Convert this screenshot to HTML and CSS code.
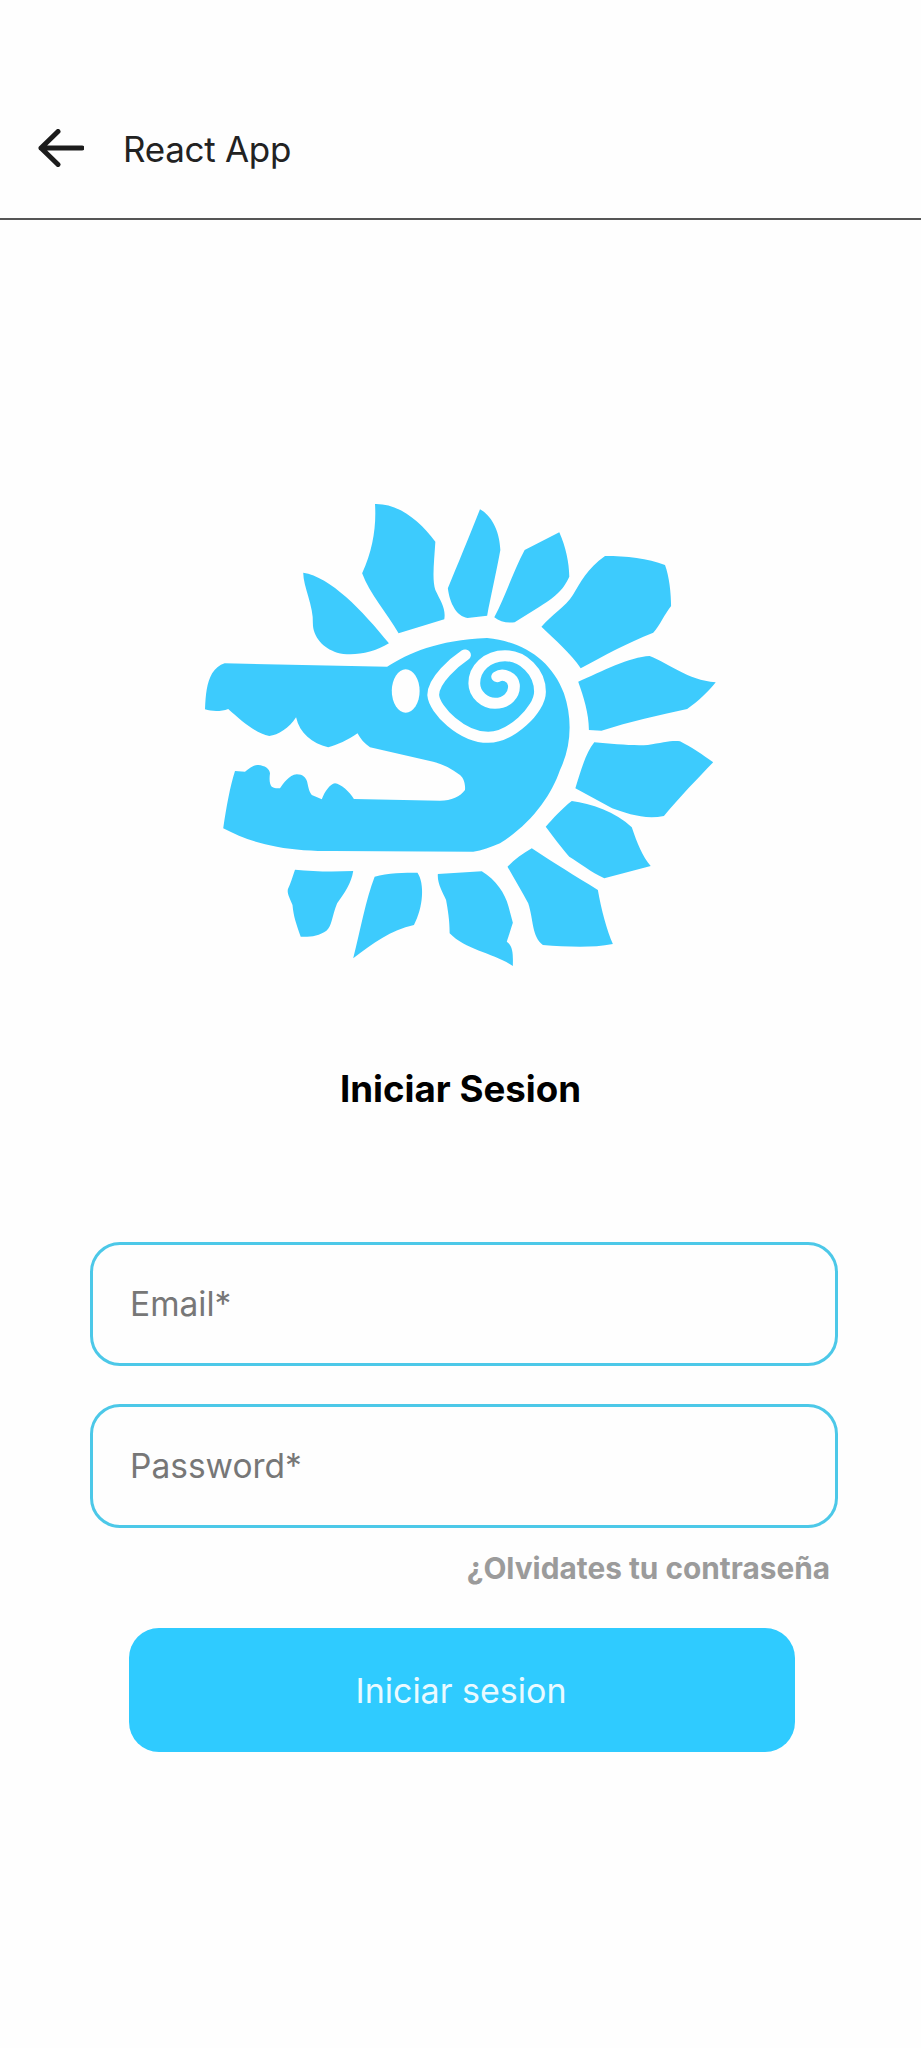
FILE: index.html
```html
<!DOCTYPE html>
<html lang="es">
<head>
<meta charset="utf-8">
<title>React App</title>
<link rel="stylesheet" href="styles.css">
</head>
<body>
<header class="topbar">
  <svg class="back" viewBox="0 0 46 38" aria-hidden="true"><path d="M44 19H3M20 2.500 3 19l17 16.500"/></svg>
  <span class="topbar-title">React App</span>
</header>
<main class="login">
  <svg class="logo" viewBox="0 0 1568 1500" preserveAspectRatio="none" aria-hidden="true">
    <g class="logo-fill">
      <path d="M345 278C420 290 510 390 585 490C540 520 480 530 440 518C400 505 372 470 372 430C375 380 345 320 345 278Z"/>
      <path d="M546 72C610 70 670 120 715 185C712 240 705 300 715 330C730 365 745 385 740 418L612 460C580 400 530 340 510 280C540 210 550 140 546 72Z"/>
      <path d="M840 88C870 105 895 150 897 210C885 280 870 350 860 407L805 414C775 410 755 370 750 325C775 260 810 170 840 88Z"/>
      <path d="M1062 157C1080 200 1090 250 1090 290C1070 335 1050 350 1000 385L937 427C915 430 895 425 880 412C910 350 935 270 965 210Z"/>
      <path d="M1190 228C1250 228 1310 235 1358 255C1370 290 1375 340 1375 378C1355 405 1345 435 1325 458C1250 490 1190 525 1122 565C1095 520 1050 480 1012 440C1040 405 1080 380 1100 345C1120 310 1140 265 1190 228Z"/>
      <path d="M1115 605C1180 575 1260 530 1315 528C1370 550 1420 600 1500 607C1480 635 1450 665 1420 687C1340 705 1260 725 1180 752L1145 750C1145 700 1130 650 1115 605Z"/>
      <path d="M1160 787C1210 792 1270 798 1310 795C1350 788 1380 780 1400 784C1430 800 1465 825 1493 847C1450 895 1400 950 1355 1008C1300 1020 1250 1000 1210 985L1107 925C1120 880 1135 820 1160 787Z"/>
      <path d="M1097 963C1150 970 1220 995 1265 1042C1280 1090 1295 1130 1318 1158L1188 1195C1150 1175 1120 1150 1090 1130C1070 1105 1045 1070 1024 1040C1045 1015 1070 985 1097 963Z"/>
      <path d="M985 1105C1040 1145 1110 1190 1170 1230C1180 1290 1195 1350 1212 1392C1150 1405 1080 1400 1016 1395C985 1370 990 1320 975 1270C955 1230 935 1195 917 1160C935 1140 960 1120 985 1105Z"/>
      <path d="M722 1182L845 1174C885 1200 910 1240 920 1280L932 1328C925 1350 920 1370 915 1385C935 1400 932 1430 932 1458C880 1420 800 1410 755 1360C755 1320 750 1290 745 1260C735 1235 720 1210 722 1182Z"/>
      <path d="M545 1190C580 1178 630 1178 665 1178C685 1210 682 1280 655 1335C590 1350 540 1390 485 1435C505 1350 520 1260 545 1190Z"/>
      <path d="M322 1169C375 1175 430 1175 485 1173C480 1210 460 1240 440 1270C425 1310 425 1340 410 1352C390 1368 360 1372 338 1370C325 1330 318 1310 315 1275C305 1250 300 1240 302 1228C310 1210 315 1190 322 1169Z"/>
      <path d="M125 550L580 560C640 520 720 480 860 474C960 485 1040 540 1075 640C1100 720 1095 800 1064 870C1040 945 985 1030 896 1090C870 1102 845 1112 821 1115L429 1113C370 1113 320 1110 271 1100C215 1090 165 1070 121 1045C130 980 140 920 154 873L182 875C195 865 208 853 219 855C238 857 250 865 252 880C250 895 250 912 257 920C265 925 272 925 280 925C290 910 305 885 327 883C345 883 352 893 356 905C360 925 362 935 369 945L397 958C405 935 420 912 434 910C450 912 475 935 487 957L728 962C760 962 785 950 798 930C800 905 790 890 784 885C760 865 735 853 709 845L532 802C515 790 505 775 497 760C470 780 440 795 415 802C370 790 335 760 325 712C305 745 275 765 250 768C210 760 170 720 135 687C115 695 90 695 70 688C72 640 75 610 90 580C100 565 110 555 125 550Z"/>
    </g>
    <ellipse class="logo-eye" cx="632" cy="633" rx="39" ry="65"/>
    <path class="logo-spiral" d="M798 525C770 545 709 600 709 645C712 690 790 772 863 772C925 772 1008 690 1008 635C1008 575 960 527 910 527C860 527 824 565 824 610C824 645 855 670 882 670C915 670 937 645 935 615C932 592 905 578 888 590"/>
  </svg>
  <h1 class="heading">Iniciar Sesion</h1>
  <form class="form">
    <input class="field" type="email" placeholder="Email*">
    <input class="field" type="password" placeholder="Password*">
    <a class="forgot" href="#">¿Olvidates tu contraseña</a>
    <button class="submit" type="button">Iniciar sesion</button>
  </form>
</main>
</body>
</html>
```
FILE: styles.css
```css
* { box-sizing: border-box; }
html, body { margin: 0; padding: 0; }
body {
  background: #fefefe;
  font-family: Inter, "Noto Sans", sans-serif;
  height: 2048px;
  overflow: hidden;
}
.topbar {
  height: 220px;
  border-bottom: 2px solid #555;
  display: flex;
  align-items: center;
  padding: 80px 0 0 38px;
  gap: 39px;
}
.back {
  width: 46px;
  height: 38px;
  flex: none;
  margin-top: -3px;
}
.back path {
  fill: none;
  stroke: #1c1c1c;
  stroke-width: 5px;
  stroke-linecap: round;
  stroke-linejoin: round;
}
.topbar-title {
  font-size: 35px;
  font-weight: 400;
  color: #222;
  letter-spacing: -0.3px;
}
.login {
  display: flex;
  flex-direction: column;
  align-items: flex-start;
}
.logo {
  display: block;
  width: 560px;
  height: 500px;
  margin: 260px 0 0 180px;
}
.logo-fill path { fill: #3dcbfd; }
.logo-eye { fill: #fefefe; }
.logo-spiral {
  fill: none;
  stroke: #fefefe;
  stroke-width: 33;
  stroke-linecap: round;
  stroke-linejoin: round;
}
.heading {
  align-self: stretch;
  margin: 84px 0 0;
  text-align: center;
  font-size: 36.700px;
  line-height: 50px;
  font-weight: 700;
  color: #000;
}
.form {
  display: flex;
  flex-direction: column;
  align-items: flex-start;
  margin: 128px 0 0 90px;
  width: 749px;
}
.field {
  width: 748px;
  height: 124px;
  margin-bottom: 38px;
  border: 3px solid #4cc8e8;
  border-radius: 30px;
  background: #fefefe;
  padding: 0 0 0 37px;
  font: 400 33.500px Inter, "Noto Sans", sans-serif;
  outline: none;
}
.field::placeholder { color: #777; opacity: 1; }
.forgot {
  align-self: flex-end;
  margin: -18px 9px 0 0;
  font-size: 29.800px;
  line-height: 40px;
  font-weight: 700;
  color: #9b9b9b;
  text-decoration: none;
}
.submit {
  width: 666px;
  height: 124px;
  margin: 40px 0 0 39px;
  padding: 0 2px 0 0;
  border: 0;
  border-radius: 30px;
  background: #2fcbff;
  color: #eafaff;
  font: 400 34px Inter, "Noto Sans", sans-serif;
}
```
